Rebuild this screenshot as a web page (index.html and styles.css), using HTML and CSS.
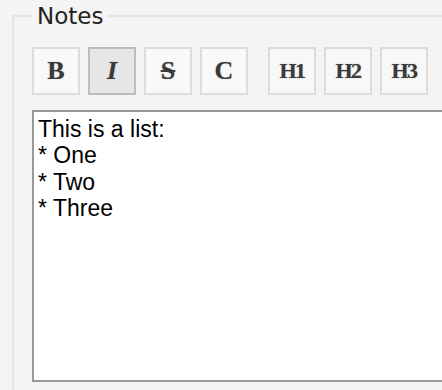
FILE: index.html
```html
<!DOCTYPE html>
<html>
<head>
<meta charset="utf-8">
<link rel="stylesheet" href="styles.css">
</head>
<body>
<fieldset class="notes">
  <legend class="notes-title">Notes</legend>
  <div class="toolbar">
    <div class="tool-group">
      <button class="tool tool-b">B</button>
      <button class="tool tool-i active">I</button>
      <button class="tool tool-s">S</button>
      <button class="tool tool-c">C</button>
    </div>
    <div class="tool-group">
      <button class="tool tool-h">H1</button>
      <button class="tool tool-h">H2</button>
      <button class="tool tool-h">H3</button>
    </div>
  </div>
  <textarea class="editor">This is a list:
* One
* Two
* Three</textarea>
</fieldset>
</body>
</html>
```
FILE: styles.css
```css
html, body {
  margin: 0;
  padding: 0;
  background: #f4f4f4;
  overflow: hidden;
  width: 442px;
  height: 390px;
}
body {
  padding-left: 12px;
  padding-top: 3px;
  box-sizing: border-box;
}
.notes {
  margin: 0;
  width: 500px;
  height: 420px;
  border: 2px solid #e4e4e4;
  padding: 18px 0 0 18px;
  box-sizing: border-box;
  background: #f4f4f4;
}
.notes-title {
  padding: 0 5px;
  font-family: "DejaVu Sans", Verdana, sans-serif;
  font-size: 23px;
  line-height: 26px;
  color: #222;
}
.toolbar {
  display: flex;
  gap: 20px;
  margin-bottom: 15px;
}
.tool-group {
  display: flex;
  gap: 8px;
}
.tool {
  width: 48px;
  height: 48px;
  margin: 0;
  padding: 0;
  box-sizing: border-box;
  border: 2px solid #dcdcdc;
  background: #f8f8f8;
  color: #3a3a3a;
  font-family: "Liberation Serif", "Times New Roman", serif;
  font-weight: bold;
  font-size: 26px;
  line-height: 1;
  display: flex;
  align-items: center;
  justify-content: center;
  text-shadow: 0 0 1px rgba(60,60,60,0.5);
}
.tool.active {
  background: #e6e6e6;
  border-color: #bcbcbc;
}
.tool-i {
  font-style: italic;
}
.tool-s {
  text-decoration: line-through;
  text-decoration-thickness: 2px;
}
.tool-h {
  font-size: 22px;
  letter-spacing: -1.5px;
}
.editor {
  display: block;
  width: 100%;
  height: 272px;
  box-sizing: border-box;
  margin: 0;
  border: 2px solid #999;
  padding: 4px 4px;
  background: #fff;
  color: #000;
  font-family: "Liberation Sans", Arial, sans-serif;
  font-size: 23px;
  line-height: 26.4px;
  resize: none;
  outline: none;
}
```
